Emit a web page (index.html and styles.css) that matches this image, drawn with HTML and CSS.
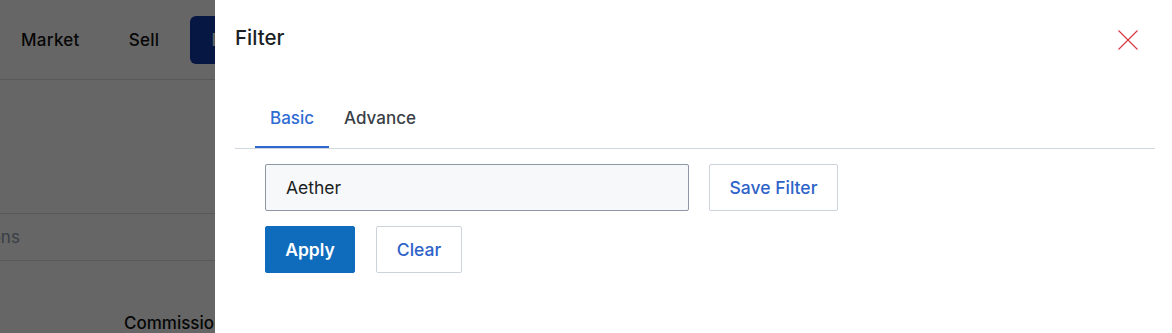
FILE: index.html
```html
<!DOCTYPE html>
<html lang="en">
<head>
<meta charset="utf-8">
<title>Filter</title>
<link rel="stylesheet" href="styles.css">
</head>
<body>
<div class="page">
  <header class="topbar">
    <nav class="nav">
      <a class="nav-item">Market</a>
      <a class="nav-item">Sell</a>
      <a class="nav-item nav-active">Inventory</a>
    </nav>
  </header>
  <section class="content">
    <div class="search-row">Search transactions</div>
    <div class="table-head">
      <span class="th">Commission</span>
    </div>
  </section>
</div>

<div class="overlay"></div>

<aside class="drawer">
  <div class="drawer-head">
    <h2 class="drawer-title">Filter</h2>
    <button class="close-btn" aria-label="Close">
      <svg width="22" height="22" viewBox="0 0 22 22"><path d="M1.5 1.5 L20.5 20.5 M20.5 1.5 L1.5 20.5" stroke="#d9363e" stroke-width="1.1" fill="none"/></svg>
    </button>
  </div>
  <div class="tabs">
    <div class="tab tab-active">Basic</div>
    <div class="tab">Advance</div>
  </div>
  <div class="drawer-body">
    <div class="row">
      <input class="text-input" type="text" value="Aether">
      <button class="btn btn-outline btn-save">Save Filter</button>
    </div>
    <div class="row">
      <button class="btn btn-primary">Apply</button>
      <button class="btn btn-outline btn-clear">Clear</button>
    </div>
  </div>
</aside>
</body>
</html>
```

FILE: styles.css
```css
* { box-sizing: border-box; }
html, body { margin: 0; padding: 0; }
body {
  width: 1172px;
  height: 333px;
  overflow: hidden;
  font-family: Inter, "Noto Sans", "Liberation Sans", sans-serif;
  background: #ffffff;
  color: #1f2328;
  position: relative;
}

/* background page */
.page { width: 1172px; }
.topbar {
  height: 80px;
  border-bottom: 1px solid #dfdfdf;
  padding: 16px 0 0 21px;
}
.nav { display: flex; align-items: center; height: 48px; }
.nav-item {
  font-size: 17px;
  font-weight: 500;
  color: #111;
  letter-spacing: 0.3px;
  margin-right: 49px;
}
.nav-item:nth-child(2) { margin-right: 31px; }
.nav-active {
  background: #0f3aa8;
  color: #fff;
  height: 48px;
  border-radius: 6px;
  display: flex;
  align-items: center;
  padding: 0 20px 0 21px;
}
.content { padding-top: 133px; }
.search-row {
  height: 48px;
  border-top: 1px solid #dfdfdf;
  border-bottom: 1px solid #dfdfdf;
  display: flex;
  align-items: center;
  font-size: 17px;
  color: #8e9aad;
  margin-left: -140px;
}
.table-head {
  padding: 52px 0 0 124px;
  font-size: 17px;
  font-weight: 500;
  color: #111;
}

.overlay {
  position: absolute;
  inset: 0;
  background: rgba(0, 0, 0, 0.6);
}

/* drawer */
.drawer {
  position: absolute;
  top: 0;
  right: 0;
  bottom: 0;
  width: 957px;
  background: #ffffff;
  padding: 0 17px 0 20px;
}
.drawer-head {
  display: flex;
  justify-content: space-between;
  align-items: flex-start;
  height: 100px;
  padding-top: 25px;
}
.drawer-title {
  margin: 0;
  font-size: 20.5px;
  font-weight: 500;
  line-height: 26px;
  color: #1b1f24;
}
.close-btn {
  background: none;
  border: 0;
  padding: 0;
  margin: 4px 16px 0 0;
  width: 22px;
  height: 22px;
  cursor: pointer;
}
.close-btn svg { display: block; }

.tabs {
  display: flex;
  padding-left: 20px;
  border-bottom: 1px solid #d0d6de;
}
.tab {
  font-size: 17px;
  font-weight: 500;
  color: #3a3f47;
  padding: 8px 15px 17px;
  line-height: 21px;
  border-bottom: 2px solid transparent;
}
.tab-active {
  color: #2f6bd2;
  border-bottom: 2px solid #2f68d0;
}

.drawer-body {
  padding: 15px 0 0 30px;
  display: flex;
  flex-direction: column;
  gap: 15px;
}
.row { display: flex; gap: 20px; align-items: center; }
.text-input {
  width: 424px;
  height: 47px;
  border: 1px solid #8d97a5;
  border-radius: 2px;
  background: #f6f8fa;
  font-family: inherit;
  font-size: 17.5px;
  color: #1b1f24;
  padding: 0 20px;
  outline: none;
}
.btn {
  height: 47px;
  font-family: inherit;
  font-size: 17.5px;
  font-weight: 500;
  border-radius: 2px;
  cursor: pointer;
  padding: 0;
}
.btn-outline {
  background: #ffffff;
  border: 1px solid #cdd3dc;
  color: #2e63c9;
}
.btn-save { width: 129px; }
.btn-primary {
  width: 90px;
  background: #0f6cbd;
  border: 1px solid #0f6cbd;
  color: #ffffff;
  font-weight: 600;
}
.btn-clear { width: 86px; margin-left: 1px; }
```
